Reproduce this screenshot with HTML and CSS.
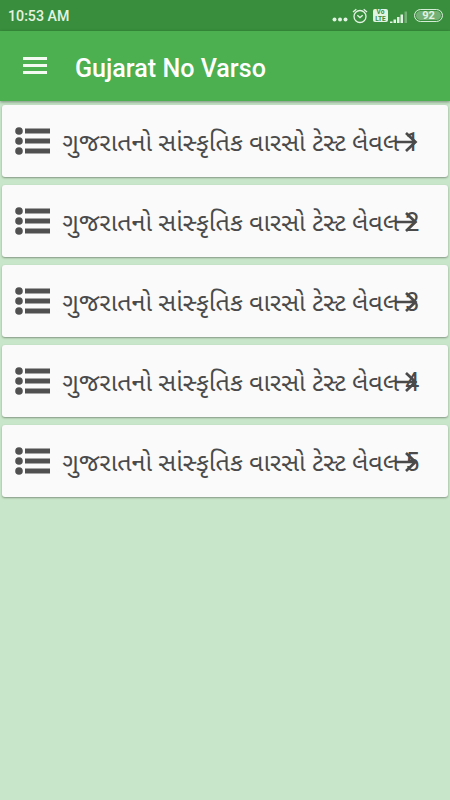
FILE: index.html
```html
<!DOCTYPE html>
<html lang="gu">
<head>
    <meta charset="UTF-8">
    <meta name="viewport" content="width=device-width, initial-scale=1.0">
    <title>Gujarat No Varso</title>
    <link rel="stylesheet" href="styles.css">
</head>
<body>
    <!-- Shared icons -->
    <svg class="icon-defs" width="0" height="0">
        <symbol id="list" viewBox="0 0 36 28">
            <circle cx="4" cy="4" r="3.8"/>
            <circle cx="4" cy="14" r="3.8"/>
            <circle cx="4" cy="24" r="3.8"/>
            <path d="M10 1.5H35V6.5H10zM10 11.5H35V16.5H10zM10 21.5H35V26.5H10z"/>
        </symbol>
        <symbol id="arrow" viewBox="0 0 24 20">
            <path d="M1.5 10H22M12 1L21.5 10L12 19" fill="none" stroke="currentColor" stroke-width="2.7"/>
        </symbol>
    </svg>

    <div class="status-bar">
        <span class="time">10:53 AM</span>
        <div class="status-icons">
            <svg width="16" height="16" viewBox="0 0 16 16" fill="currentColor">
                <circle cx="2.5" cy="11.5" r="2"/>
                <circle cx="8" cy="11.5" r="2"/>
                <circle cx="13.5" cy="11.5" r="2"/>
            </svg>
            <svg class="alarm" width="16" height="16" viewBox="0 0 16 16" fill="none" stroke="currentColor" stroke-width="1.3">
                <circle cx="8" cy="8.5" r="6"/>
                <path d="M5.3 7.2L8 9.6L10.7 7.2M1 4L4.3 1.2M15 4L11.7 1.2"/>
            </svg>
            <span class="volte"><b>Vo</b><b>LTE</b></span>
            <svg class="signal" width="18" height="14" viewBox="0 0 18 14" fill="currentColor">
                <path d="M0 11.5h2.5V13H0zM3.5 9.5H6V13H3.5zM7 7h2.5v6H7zM10.5 4.5H13V13h-2.5z"/>
                <path d="M14.5 1.5H17V13h-2.5z" opacity=".35"/>
            </svg>
            <span class="battery">92</span>
        </div>
    </div>

    <header class="toolbar">
        <button type="button" class="menu-btn" aria-label="Menu">
            <span></span>
            <span></span>
            <span></span>
        </button>
        <h1>Gujarat No Varso</h1>
    </header>

    <main class="level-list">
        <div class="card">
            <svg class="list-icon"><use href="#list"/></svg>
            <span class="level-name">ગુજરાતનો સાંસ્કૃતિક વારસો ટેસ્ટ લેવલ 1</span>
            <svg class="arrow-icon"><use href="#arrow"/></svg>
        </div>
        <div class="card">
            <svg class="list-icon"><use href="#list"/></svg>
            <span class="level-name">ગુજરાતનો સાંસ્કૃતિક વારસો ટેસ્ટ લેવલ 2</span>
            <svg class="arrow-icon"><use href="#arrow"/></svg>
        </div>
        <div class="card">
            <svg class="list-icon"><use href="#list"/></svg>
            <span class="level-name">ગુજરાતનો સાંસ્કૃતિક વારસો ટેસ્ટ લેવલ 3</span>
            <svg class="arrow-icon"><use href="#arrow"/></svg>
        </div>
        <div class="card">
            <svg class="list-icon"><use href="#list"/></svg>
            <span class="level-name">ગુજરાતનો સાંસ્કૃતિક વારસો ટેસ્ટ લેવલ 4</span>
            <svg class="arrow-icon"><use href="#arrow"/></svg>
        </div>
        <div class="card">
            <svg class="list-icon"><use href="#list"/></svg>
            <span class="level-name">ગુજરાતનો સાંસ્કૃતિક વારસો ટેસ્ટ લેવલ 5</span>
            <svg class="arrow-icon"><use href="#arrow"/></svg>
        </div>
    </main>
</body>
</html>
```
FILE: styles.css
```css
* {
    box-sizing: border-box;
}

body {
    font-family: Roboto, "Noto Sans Gujarati", "Noto Sans", sans-serif;
    background-color: #c8e6c9;
    color: #4a4a4a;
    margin: 0;
    min-height: 100vh;
}

.icon-defs {
    position: absolute;
}

.status-bar {
    display: flex;
    align-items: center;
    justify-content: space-between;
    height: 31px;
    padding: 0 7px 0 8px;
    background-color: #388e3c;
    color: #e3f3e3;
}

.time {
    font-size: 14.2px;
    font-weight: 500;
    line-height: 31px;
    padding-top: 1px;
}

.status-icons {
    display: flex;
    align-items: center;
}

.alarm {
    margin-left: 4px;
}

.volte {
    display: flex;
    flex-direction: column;
    align-items: center;
    width: 15px;
    height: 13px;
    margin-left: 5px;
    border-radius: 2px;
    background-color: #e3f3e3;
    color: #388e3c;
    font-size: 6.5px;
    line-height: 6.5px;
}

.signal {
    margin: 2px 0 0 2px;
}

.battery {
    width: 29px;
    height: 13px;
    margin-left: 6px;
    border: 1px solid #d5ecd6;
    border-radius: 7px;
    background-color: #72b075;
    box-shadow: inset 0 0 0 1px #388e3c;
    font-size: 11px;
    font-weight: 700;
    line-height: 11px;
    text-align: center;
}

.toolbar {
    display: flex;
    align-items: center;
    position: relative;
    height: 70px;
    padding-left: 23px;
    background-color: #4caf50;
    color: #fff;
    box-shadow: 0 1px 3px rgba(0, 0, 0, 0.4);
}

.toolbar h1 {
    margin: 4px 0 0 28px;
    font-size: 25.1px;
    font-weight: 500;
}

.menu-btn {
    display: flex;
    flex-direction: column;
    gap: 4px;
    width: 24px;
    padding: 0 0 1px;
    border: none;
    background: none;
}

.menu-btn span {
    height: 3px;
    background-color: #f2faf2;
}

.level-list {
    display: flex;
    flex-direction: column;
    gap: 8px;
    padding: 4px 2px;
}

.card {
    display: flex;
    align-items: center;
    position: relative;
    height: 72px;
    padding-left: 13px;
    border-radius: 3px;
    background-color: #fafafa;
    box-shadow: 0 1px 2px rgba(0, 0, 0, 0.35);
}

.list-icon {
    width: 36px;
    height: 28px;
    fill: #505050;
}

.level-name {
    margin-left: 11.5px;
    padding-top: 4px;
    font-size: 25.1px;
    line-height: 36px;
    white-space: nowrap;
}

/* The arrow lies over the end of the level name */
.arrow-icon {
    position: absolute;
    right: 30px;
    top: 27px;
    width: 24px;
    height: 20px;
}
```
